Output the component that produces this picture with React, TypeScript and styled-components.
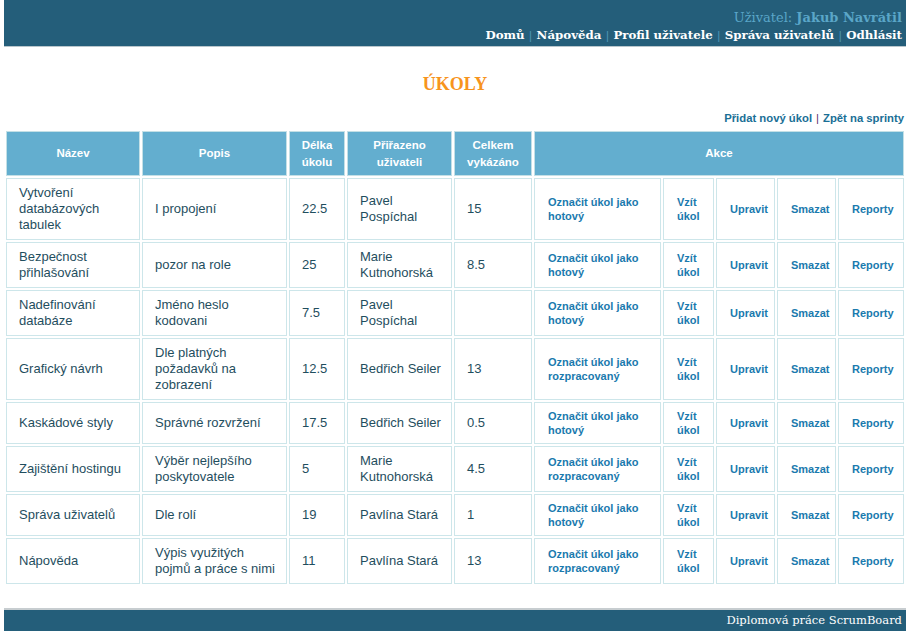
import React from "react";
import styled, { createGlobalStyle } from "styled-components";

const GlobalStyle = createGlobalStyle`
  html, body {
    margin: 0;
    padding: 0;
    background: #fff;
  }
  body {
    font-family: "Liberation Sans", Arial, sans-serif;
  }
`;

type Task = {
  name: string;
  desc: string;
  length: string;
  user: string;
  logged: string;
  state: string;
};

const tasks: Task[] = [
  { name: "Vytvoření databázových tabulek", desc: "I propojení", length: "22.5", user: "Pavel Pospíchal", logged: "15", state: "hotový" },
  { name: "Bezpečnost přihlašování", desc: "pozor na role", length: "25", user: "Marie Kutnohorská", logged: "8.5", state: "hotový" },
  { name: "Nadefinování databáze", desc: "Jméno heslo kodovani", length: "7.5", user: "Pavel Pospíchal", logged: "", state: "hotový" },
  { name: "Grafický návrh", desc: "Dle platných požadavků na zobrazení", length: "12.5", user: "Bedřich Seiler", logged: "13", state: "rozpracovaný" },
  { name: "Kaskádové styly", desc: "Správné rozvržení", length: "17.5", user: "Bedřich Seiler", logged: "0.5", state: "hotový" },
  { name: "Zajištění hostingu", desc: "Výběr nejlepšího poskytovatele", length: "5", user: "Marie Kutnohorská", logged: "4.5", state: "rozpracovaný" },
  { name: "Správa uživatelů", desc: "Dle rolí", length: "19", user: "Pavlína Stará", logged: "1", state: "hotový" },
  { name: "Nápověda", desc: "Výpis využitých pojmů a práce s nimi", length: "11", user: "Pavlína Stará", logged: "13", state: "rozpracovaný" },
];

const colWidths = [134, 145, 56, 105, 78, 127, 51, 59, 59, 66];

const navItems = ["Domů", "Nápověda", "Profil uživatele", "Správa uživatelů", "Odhlásit"];

const App: React.FC = () => {
  return (
    <Page>
      <GlobalStyle />
      <TopBar>
        <UserLine>
          Uživatel: <b>Jakub Navrátil</b>
        </UserLine>
        <Nav>
          {navItems.map((item, i) => (
            <React.Fragment key={item}>
              {i > 0 && <NavSep>|</NavSep>}
              <NavLink>{item}</NavLink>
            </React.Fragment>
          ))}
        </Nav>
      </TopBar>

      <Content>
        <Title>ÚKOLY</Title>
        <SubLinks>
          <SubLink>Přidat nový úkol</SubLink>
          <SubSep>|</SubSep>
          <SubLink>Zpět na sprinty</SubLink>
        </SubLinks>

        <Table>
          <colgroup>
            {colWidths.map((w, i) => (
              <col key={i} style={{ width: w }} />
            ))}
          </colgroup>
          <thead>
            <tr>
              <Th>Název</Th>
              <Th>Popis</Th>
              <Th>Délka<br />úkolu</Th>
              <Th>Přiřazeno<br />uživateli</Th>
              <Th>Celkem<br />vykázáno</Th>
              <Th colSpan={5}>Akce</Th>
            </tr>
          </thead>
          <tbody>
            {tasks.map((t) => (
              <tr key={t.name}>
                <Td>{t.name}</Td>
                <Td>{t.desc}</Td>
                <Td>{t.length}</Td>
                <Td>{t.user}</Td>
                <Td>{t.logged}</Td>
                <ActionTd>Označit úkol jako {t.state}</ActionTd>
                <ActionTd>Vzít úkol</ActionTd>
                <ActionTd>Upravit</ActionTd>
                <ActionTd>Smazat</ActionTd>
                <ActionTd>Reporty</ActionTd>
              </tr>
            ))}
          </tbody>
        </Table>
      </Content>

      <Footer>Diplomová práce ScrumBoard</Footer>
    </Page>
  );
};

const Page = styled.div`
  width: 902px;
  margin: 0 4px;
  min-height: 631px;
  display: flex;
  flex-direction: column;
`;

const TopBar = styled.div`
  background: #245e7a;
  height: 47px;
  box-sizing: border-box;
  border-bottom: 1px solid #b9c6cc;
  padding: 0 4px 2px 0;
  display: flex;
  flex-direction: column;
  align-items: flex-end;
  justify-content: flex-end;
  font-family: "DejaVu Serif", Georgia, serif;
`;

const UserLine = styled.div`
  color: #5aa6c8;
  font-size: 13px;
  line-height: 18px;
  b {
    font-weight: bold;
  }
`;

const Nav = styled.div`
  display: flex;
  align-items: center;
  font-size: 11.8px;
  line-height: 17px;
`;

const NavLink = styled.span`
  color: #ffffff;
  font-weight: bold;
`;

const NavSep = styled.span`
  color: #4f95b5;
  margin: 0 4px;
`;

const Content = styled.div`
  flex: 1;
`;

const Title = styled.h1`
  margin: 26px 0 0;
  text-align: center;
  font-family: "Liberation Serif", "Times New Roman", serif;
  font-size: 18px;
  line-height: 22px;
  font-weight: bold;
  color: #f7941d;
`;

const SubLinks = styled.div`
  margin-top: 16px;
  display: flex;
  justify-content: flex-end;
  align-items: center;
  padding-right: 2px;
  font-size: 11.3px;
  line-height: 14px;
  font-weight: bold;
`;

const SubLink = styled.span`
  color: #1a6f96;
`;

const SubSep = styled.span`
  color: #5a2a6a;
  margin: 0 4px;
  font-weight: normal;
`;

const Table = styled.table`
  width: 100%;
  margin-top: 4px;
  table-layout: fixed;
  border-collapse: separate;
  border-spacing: 2px;
`;

const Th = styled.th`
  background: #63aecf;
  border: 1px solid #c3e0e6;
  color: #ffffff;
  font-size: 11.5px;
  font-weight: bold;
  line-height: 17px;
  height: 45px;
  box-sizing: border-box;
  padding: 0 4px;
  text-align: center;
`;

const Td = styled.td`
  border: 1px solid #cde6ea;
  color: #1f4e5e;
  font-size: 13px;
  line-height: 16px;
  padding: 6px 8px 6px 12px;
  text-align: left;
  vertical-align: middle;
`;

const ActionTd = styled.td`
  border: 1px solid #cde6ea;
  color: #1a7aae;
  font-size: 11px;
  font-weight: bold;
  line-height: 14px;
  padding: 6px 2px 6px 13px;
  text-align: left;
  vertical-align: middle;
`;

const Footer = styled.div`
  margin-top: 22px;
  background: #245e7a;
  border-top: 2px solid #c7cdd0;
  height: 23px;
  box-sizing: border-box;
  color: #ffffff;
  font-family: "DejaVu Serif", Georgia, serif;
  font-size: 11.5px;
  line-height: 21px;
  text-align: right;
  padding-right: 4px;
`;

export default App;
